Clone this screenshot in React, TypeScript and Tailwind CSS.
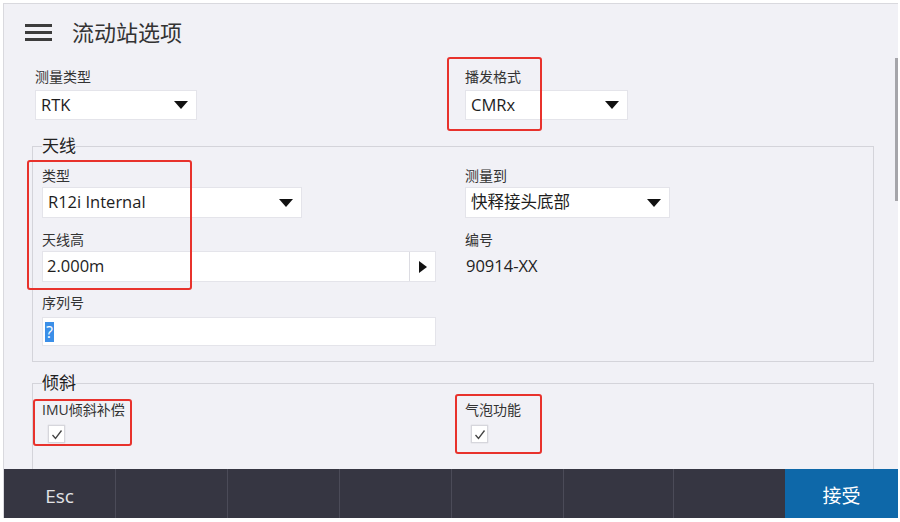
import React from 'react';

const font = { fontFamily: '"Open Sans", "Noto Sans CJK SC", sans-serif' };

const Caret = () => (
  <svg width="14" height="8" viewBox="0 0 14 8" className="shrink-0">
    <path d="M0 0 H14 L7 8 Z" fill="#111" />
  </svg>
);

const Label: React.FC<{ text: string }> = ({ text }) => (
  <div className="h-[16px] text-[14px] leading-[16px] text-[#333]">{text}</div>
);

const Select: React.FC<{ value: string; width: string; height?: string }> = ({ value, width, height = 'h-[31px]' }) => (
  <div className={`${width} ${height} bg-white border border-[#e4e4ea] flex items-center justify-between pl-[5px] pr-[8px] text-[16.5px] text-[#1d1d1d]`}>
    <span>{value}</span>
    <Caret />
  </div>
);

const Check = () => (
  <div className="w-[17px] h-[18px] bg-white border border-[#d6d6dc] shadow-[0_0_1px_rgba(0,0,0,0.2)] flex items-center justify-center">
    <svg width="12" height="11" viewBox="0 0 12 11">
      <polyline points="1.5,6 4.5,9.5 10.5,1.5" fill="none" stroke="#444" strokeWidth="1.3" />
    </svg>
  </div>
);

const Mark: React.FC<{ className: string }> = ({ className }) => (
  <div className={`absolute border-2 border-[#e8322c] rounded-[3px] pointer-events-none ${className}`} />
);

export default function App() {
  const footerCells = [
    { text: 'Esc', w: 'w-[111px]' },
    { text: '', w: 'w-[112px]' },
    { text: '', w: 'w-[112px]' },
    { text: '', w: 'w-[112px]' },
    { text: '', w: 'w-[112px]' },
    { text: '', w: 'w-[110px]' },
    { text: '', w: 'w-[112px]' },
  ];

  return (
    <div className="relative w-[900px] h-[522px] bg-white overflow-hidden" style={font}>
      <div className="relative ml-[3px] mt-[3px] w-[895px] h-[515px] border-l border-t border-[#d9d9de] bg-[#f1f1f6] flex flex-col">
        {/* header */}
        <div className="h-[51px] pt-[13px] shrink-0">
          <div className="h-[30px] flex items-center pl-[21px]">
            <div className="flex flex-col gap-[4px]">
              <div className="w-[27px] h-[3px] bg-[#3c3c3c]" />
              <div className="w-[27px] h-[3px] bg-[#3c3c3c]" />
              <div className="w-[27px] h-[3px] bg-[#3c3c3c]" />
            </div>
            <span className="ml-[20px] text-[22px] text-[#333]">流动站选项</span>
          </div>
        </div>

        {/* content */}
        <div className="flex-1 overflow-hidden">
          <div className="pl-[31px] pt-[14px] grid grid-cols-[430px_1fr]">
            <div>
              <Label text="测量类型" />
              <div className="mt-[5px]"><Select value="RTK" width="w-[162px]" height="h-[30px]" /></div>
            </div>
            <div>
              <Label text="播发格式" />
              <div className="mt-[5px]"><Select value="CMRx" width="w-[163px]" height="h-[30px]" /></div>
            </div>
          </div>

          <fieldset className="ml-[28px] mt-[16px] w-[842px] border border-[#d4d4da] pl-[9px] pt-[12px] pb-[15px]">
            <legend className="text-[17px] leading-[20px] text-[#222]">天线</legend>
            <div className="grid grid-cols-[423px_1fr] gap-y-[14px]">
              <div>
                <Label text="类型" />
                <div className="mt-[3px]"><Select value="R12i Internal" width="w-[260px]" /></div>
              </div>
              <div>
                <Label text="测量到" />
                <div className="mt-[3px]"><Select value="快释接头底部" width="w-[205px]" /></div>
              </div>
              <div>
                <Label text="天线高" />
                <div className="mt-[3px] w-[394px] h-[31px] bg-white border border-[#e4e4ea] flex items-center">
                  <span className="flex-1 pl-[4px] text-[16.5px] text-[#1d1d1d]">2.000m</span>
                  <div className="w-[26px] h-full border-l border-[#dcdce2] flex items-center justify-center">
                    <svg width="8" height="12" viewBox="0 0 8 12">
                      <path d="M0 0 L8 6 L0 12 Z" fill="#111" />
                    </svg>
                  </div>
                </div>
              </div>
              <div>
                <Label text="编号" />
                <div className="mt-[3px] h-[31px] flex items-center pl-[1px] text-[16.5px] text-[#222]">90914-XX</div>
              </div>
              <div className="-mt-[1px]">
                <Label text="序列号" />
                <div className="mt-[6px] w-[394px] h-[29px] bg-white border border-[#e4e4ea] flex items-center pl-[2px]">
                  <span className="bg-[#3b8fe8] text-white text-[16px] leading-[20px] px-[1px]">?</span>
                </div>
              </div>
              <div />
            </div>
          </fieldset>

          <fieldset className="ml-[28px] mt-[11px] w-[842px] border border-[#d4d4da] pl-[9px] pt-[9px] pb-[30px]">
            <legend className="text-[17px] leading-[20px] text-[#222]">倾斜</legend>
            <div className="grid grid-cols-[423px_1fr]">
              <div>
                <Label text="IMU倾斜补偿" />
                <div className="mt-[7px] ml-[6px]"><Check /></div>
              </div>
              <div>
                <Label text="气泡功能" />
                <div className="mt-[7px] ml-[6px]"><Check /></div>
              </div>
            </div>
          </fieldset>
        </div>

        {/* footer */}
        <div className="h-[49px] shrink-0 flex bg-[#363642]">
          {footerCells.map((c, i) => (
            <div
              key={i}
              className={`h-full ${c.w} ${i === 0 ? '' : 'border-l border-[#4b4b58]'} flex items-center justify-center pt-[6px] text-[19px] text-[#e2e2e6]`}
            >
              {c.text}
            </div>
          ))}
          <div className="flex-1 h-full bg-[#0e68a9] flex items-center justify-center pt-[6px] text-[19px] text-white">接受</div>
        </div>

        {/* scrollbar */}
        <div className="absolute right-0 top-[54px] w-[3px] h-[143px] bg-[#a5a5aa]" />
      </div>

      {/* red annotation boxes */}
      <Mark className="left-[447px] top-[57px] w-[95px] h-[74px]" />
      <Mark className="left-[27px] top-[160px] w-[165px] h-[130px]" />
      <Mark className="left-[33px] top-[399px] w-[99px] h-[47px]" />
      <Mark className="left-[455px] top-[394px] w-[87px] h-[60px]" />
    </div>
  );
}
